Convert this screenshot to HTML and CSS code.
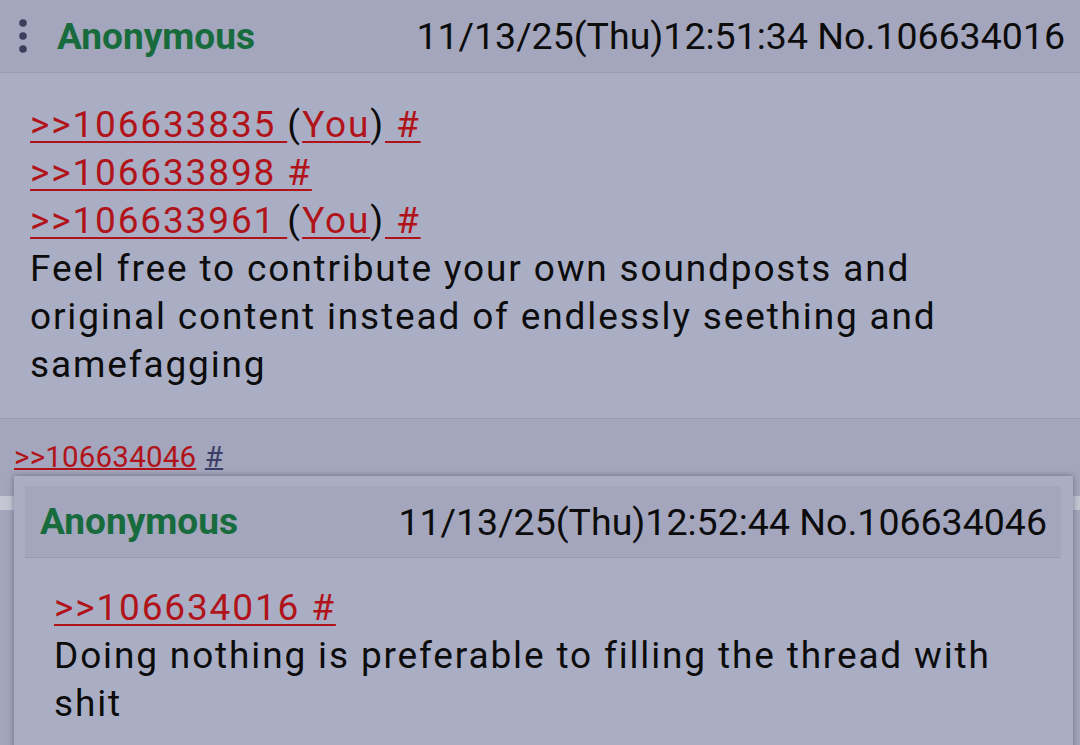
FILE: index.html
```html
<!DOCTYPE html>
<html lang="en">
<head>
  <meta charset="UTF-8">
  <title>Thread</title>
  <link rel="stylesheet" href="styles.css">
</head>
<body>
  <!-- Main post -->
  <div class="post">
    <div class="post-header">
      <svg class="menu" width="12" height="38" viewBox="0 0 12 38">
        <circle cx="6" cy="6" r="3.8"/>
        <circle cx="6" cy="19" r="3.8"/>
        <circle cx="6" cy="32" r="3.8"/>
      </svg>
      <span class="name">Anonymous</span>
      <span class="date">11/13/25(Thu)12:51:34 No.106634016</span>
    </div>
    <div class="post-body">
      <div><a class="quote">&gt;&gt;106633835 </a>(<a class="quote">You</a>)<a class="quote"> #</a></div>
      <div><a class="quote">&gt;&gt;106633898 #</a></div>
      <div><a class="quote">&gt;&gt;106633961 </a>(<a class="quote">You</a>)<a class="quote"> #</a></div>
      <div>Feel free to contribute your own soundposts and original content instead of endlessly seething and samefagging</div>
    </div>
  </div>

  <!-- Replies row -->
  <div class="replies">
    <a class="reply-link">&gt;&gt;106634046</a> <a class="reply-hash">#</a>
  </div>
  <div class="under-strip"></div>

  <!-- Hover preview of the reply -->
  <div class="popup">
    <div class="popup-header">
      <span class="name">Anonymous</span>
      <span class="date">11/13/25(Thu)12:52:44 No.106634046</span>
    </div>
    <div class="popup-body">
      <div><a class="quote">&gt;&gt;106634016 #</a></div>
      <div>Doing nothing is preferable to filling the thread with shit</div>
    </div>
  </div>
</body>
</html>
```
FILE: styles.css
```css
/* Dark-ish blue board theme, phone scale */
body {
  margin: 0;
  width: 1080px;
  height: 745px;
  overflow: hidden;
  background-color: #a3a6bc;
  font-family: Roboto, "Noto Sans", sans-serif;
  color: #0c0c0c;
  position: relative;
}
.post {
  background-color: #aaaec4;
  border-bottom: 1px solid #979ab0;
}
.post-header {
  height: 72px;
  display: flex;
  align-items: center;
  padding: 0 15px 0 17px;
  background-color: #a3a6bc;
  border-bottom: 1px solid #979ab0;
}
.menu {
  fill: #3b3e5c;
  margin-right: 28px;
}
.name {
  color: #176b3c;
  font-weight: bold;
  font-size: 37px;
}
.date {
  margin-left: auto;
  font-size: 37.5px;
}
.post-body {
  padding: 28px 45px 29px 30px;
  font-size: 37px;
  line-height: 48px;
  letter-spacing: 1.85px;
}
.quote {
  color: #b0141a;
  text-decoration: underline;
  text-decoration-thickness: 2px;
  text-underline-offset: 4px;
}
/* Reply list under the post */
.replies {
  height: 57px;
  padding: 20px 0 0 14px;
  font-size: 29.5px;
  line-height: 36px;
  letter-spacing: 0.2px;
  word-spacing: 1px;
}
.reply-link {
  color: #b0141a;
  text-decoration: underline;
  text-decoration-thickness: 2px;
}
.reply-hash {
  color: #3a3e66;
  text-decoration: underline;
  text-decoration-thickness: 2px;
}
.under-strip {
  height: 14px;
  background-color: #c4c6d2;
}
/* Floating preview */
.popup {
  position: absolute;
  top: 476px;
  left: 14px;
  right: 7px;
  bottom: -20px;
  padding: 10px 12px 0 11px;
  background-color: #aaaec4;
  box-shadow: 0 0 6px rgba(55, 60, 85, 0.55);
}
.popup-header {
  height: 71px;
  display: flex;
  align-items: center;
  padding: 0 14px 0 15px;
  background-color: #a3a6bc;
  border-bottom: 1px solid #979ab0;
}
.popup-body {
  padding: 26px 30px 0 29px;
  font-size: 37px;
  line-height: 48px;
  letter-spacing: 1.85px;
}
```
